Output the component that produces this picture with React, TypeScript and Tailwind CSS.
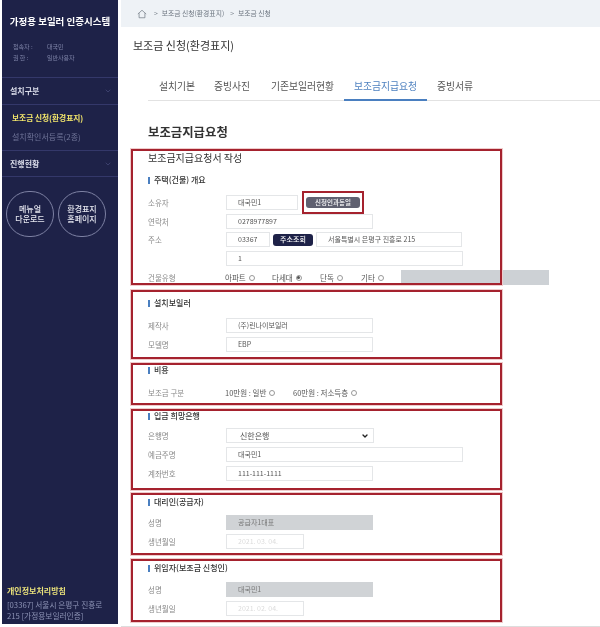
import React from 'react'
import { ChevronDown } from 'lucide-react'

const font = "font-['Noto_Sans_CJK_KR','Noto_Sans',sans-serif]"

const Box = ({ h, mt, children }: { h: string; mt: string; children: React.ReactNode }) => (
  <section className={`ml-[10px] w-[371px] border-2 border-[#a5222e] pl-[15px] shadow-[0_0_0_1px_#efcccc] ${h} ${mt}`}>
    {children}
  </section>
)

const Heading = ({ text, mt }: { text: string; mt: string }) => (
  <div className={`flex h-[10px] items-center gap-[4px] ${mt}`}>
    <span className="h-[7px] w-[2px] bg-[#4a7fc0]" />
    <span className="text-[8px] leading-none font-medium text-[#333]">{text}</span>
  </div>
)

const Row = ({ label, mt, children }: { label: string; mt: string; children: React.ReactNode }) => (
  <div className={`flex h-[15px] items-center ${mt}`}>
    <span className="w-[78px] shrink-0 text-[7.5px] leading-none text-[#8a8a8a]">{label}</span>
    {children}
  </div>
)

const Field = ({ value, w, gray, pale }: { value?: string; w: string; gray?: boolean; pale?: boolean }) => (
  <div
    className={`flex h-[15px] shrink-0 items-center border pl-[11px] text-[7px] leading-none ${w} ${
      gray ? 'border-[#d0d3d6] bg-[#d0d3d6] text-[#777]' : 'border-[#e4e6e8] bg-white text-[#555]'
    } ${pale ? 'text-[#dcdcdc]' : ''}`}
  >
    {value}
  </div>
)

const Radio = ({ label, w, checked }: { label: string; w: string; checked?: boolean }) => (
  <div className={`flex shrink-0 items-center gap-[3px] text-[7.5px] leading-none text-[#555] ${w}`}>
    <span>{label}</span>
    <span className="flex size-[6px] items-center justify-center rounded-full border border-[#999]">
      {checked && <span className="size-[3px] rounded-full bg-[#555]" />}
    </span>
  </div>
)

const Sidebar = () => (
  <aside className="ml-[2px] flex h-[624px] w-[116px] shrink-0 flex-col bg-[#1e2248]">
    <h1 className="pt-[14px] text-center text-[9.5px] leading-[14px] font-bold text-white">가정용 보일러 인증시스템</h1>
    <dl className="mt-[14px] grid h-[21px] grid-cols-[34px_1fr] pl-[11px] text-[6px] leading-[9px] text-[#7f84a8]">
      <dt>접속자 :</dt>
      <dd>대국민</dd>
      <dt>권 한 :</dt>
      <dd>일반사용자</dd>
    </dl>
    <div className="mt-[14px] flex h-[28px] items-center justify-between border-y border-[#34386a] pr-[6px] pl-[8px]">
      <span className="text-[8px] font-bold text-[#d9dbe8]">설치구분</span>
      <ChevronDown className="size-[8px] text-[#4a4f7f]" />
    </div>
    <div className="flex h-[45px] flex-col pl-[10px]">
      <span className="mt-[6px] text-[7.7px] leading-[13px] font-bold text-[#f2e56b]">보조금 신청(환경표지)</span>
      <span className="mt-[6px] text-[8px] leading-[13px] text-[#6f7498]">설치확인서등록(2종)</span>
    </div>
    <div className="flex h-[27px] items-center justify-between border-y border-[#34386a] pr-[6px] pl-[8px]">
      <span className="text-[8px] font-bold text-[#d9dbe8]">진행현황</span>
      <ChevronDown className="size-[8px] text-[#4a4f7f]" />
    </div>
    <div className="mt-[14px] flex gap-[4px] pl-[4px]">
      <div className="flex h-[46px] w-[48px] items-center justify-center rounded-full border border-[#7d81a3] text-center text-[8px] leading-[10px] font-medium text-[#e5e6ef]">
        메뉴얼
        <br />
        다운로드
      </div>
      <div className="flex h-[46px] w-[48px] items-center justify-center rounded-full border border-[#7d81a3] text-center text-[8px] leading-[10px] font-medium text-[#e5e6ef]">
        환경표지
        <br />
        홈페이지
      </div>
    </div>
    <div className="mt-auto pb-[3px] pl-[5px]">
      <p className="text-[8px] leading-[12px] font-bold text-[#e8e07a]">개인정보처리방침</p>
      <p className="mt-[2px] text-[7.7px] leading-[11px] whitespace-nowrap text-[#8d93b5]">
        [03367] 서울시 은평구 진흥로
        <br />
        215 [가정용보일러인증]
      </p>
    </div>
  </aside>
)

const App = () => (
  <div className={`flex h-[627px] w-[600px] overflow-hidden bg-white blur-[0.5px] ${font}`}>
    <Sidebar />
    <main className="isolate ml-[3px] h-[627px] min-w-0 flex-1 border-b border-[#ddd] bg-white">
      <div className="flex h-[27px] items-center gap-[4px] bg-[#eef2f6] pl-[16px] text-[6.8px] leading-none text-[#6d7680]">
        <svg viewBox="0 0 12 12" className="size-[10px]" fill="none" stroke="#66707a" strokeWidth="0.8">
          <path d="M1 6 6 1.5 11 6M2.5 5v5.5h7V5" />
        </svg>
        <span className="ml-[3px]">&gt;</span>
        <span>보조금 신청(환경표지)</span>
        <span className="ml-[2px]">&gt;</span>
        <span>보조금 신청</span>
      </div>

      <h2 className="mt-[10px] ml-[12px] h-[16px] text-[11px] leading-[16px] text-[#333]">보조금 신청(환경표지)</h2>

      <nav className="mt-[27px] ml-[27px] flex h-[21px] border-b border-[#e2e2e2] pl-[11px] text-[9.8px] leading-none text-[#555]">
        <span className="w-[55px] pt-[2px]">설치기본</span>
        <span className="w-[57px] pt-[2px]">증빙사진</span>
        <span className="w-[73px] pt-[2px]">기존보일러현황</span>
        <span className="h-[21px] w-[83px] border-b-2 border-[#4a7fc0] pt-[2px] pl-[10px] text-[#4f82c0]">보조금지급요청</span>
        <span className="ml-[10px] pt-[2px]">증빙서류</span>
      </nav>

      <h3 className="mt-[23px] ml-[27px] h-[16px] text-[12.4px] leading-[16px] font-bold text-[#333]">보조금지급요청</h3>

      <Box h="h-[136px]" mt="mt-[9px]">
        <p className="h-[13px] text-[10px] leading-[14px] text-[#333]">보조금지급요청서 작성</p>
        <Heading text="주택(건물) 개요" mt="mt-[11px]" />
        <Row label="소유자" mt="mt-[10px]">
          <Field value="대국민1" w="w-[72px]" />
          <div className="ml-[4px] flex h-[23px] w-[62px] shrink-0 items-center justify-center border-2 border-[#a5222e] bg-white">
            <div className="flex h-[11px] w-[54px] items-center justify-center rounded-[3px] bg-[#5f6070] text-[6.5px] leading-none font-medium text-white">
              신청인과동일
            </div>
          </div>
        </Row>
        <Row label="연락처" mt="mt-[4px]">
          <Field value="0278977897" w="w-[147px]" />
        </Row>
        <Row label="주소" mt="mt-[3px]">
          <Field value="03367" w="w-[44px]" />
          <div className="ml-[3px] flex h-[12px] w-[40px] items-center justify-center rounded-[3px] bg-[#1e2248] text-[7px] leading-none font-medium text-white">
            주소조회
          </div>
          <Field value="서울특별시 은평구 진흥로 215" w="w-[146px] ml-[3px]" />
        </Row>
        <Row label="" mt="mt-[4px]">
          <Field value="1" w="w-[237px]" />
        </Row>
        <Row label="건물유형" mt="mt-[4px]">
          <div className="-ml-[1px] flex items-center">
            <Radio label="아파트" w="w-[47px]" />
            <Radio label="다세대" w="w-[48px]" checked />
            <Radio label="단독" w="w-[41px]" />
            <Radio label="기타" w="w-[40px]" />
            <div className="relative -z-10 h-[15px] w-[148px] shrink-0 bg-[#cdd1d5]" />
          </div>
        </Row>
      </Box>

      <Box h="h-[69px]" mt="mt-[5px]">
        <Heading text="설치보일러" mt="mt-[6px]" />
        <Row label="제작사" mt="mt-[10px]">
          <Field value="(주)린나이보일러" w="w-[147px]" />
        </Row>
        <Row label="모델명" mt="mt-[4px]">
          <Field value="EBP" w="w-[147px]" />
        </Row>
      </Box>

      <Box h="h-[42px]" mt="mt-[4px]">
        <Heading text="비용" mt="mt-[0px]" />
        <Row label="보조금 구분" mt="mt-[10px]">
          <div className="-ml-[1px] flex items-center">
            <Radio label="10만원 : 일반" w="w-[68px]" />
            <Radio label="60만원 : 저소득층" w="w-[80px]" />
          </div>
        </Row>
      </Box>

      <Box h="h-[81px]" mt="mt-[4px]">
        <Heading text="입금 희망은행" mt="mt-[0px]" />
        <Row label="은행명" mt="mt-[7px]">
          <div className="flex h-[15px] w-[148px] items-center justify-between border border-[#e4e6e8] pr-[4px] pl-[13px] text-[8px] leading-none text-[#555]">
            신한은행
            <ChevronDown className="size-[8px] text-[#222]" strokeWidth={4} />
          </div>
        </Row>
        <Row label="예금주명" mt="mt-[4px]">
          <Field value="대국민1" w="w-[237px]" />
        </Row>
        <Row label="계좌번호" mt="mt-[4px]">
          <Field value="111-111-1111" w="w-[147px]" />
        </Row>
      </Box>

      <Box h="h-[62px]" mt="mt-[3px]">
        <Heading text="대리인(공급자)" mt="mt-[2px]" />
        <Row label="성명" mt="mt-[8px]">
          <Field value="공급자1대표" w="w-[147px]" gray />
        </Row>
        <Row label="생년월일" mt="mt-[4px]">
          <Field value="2021. 03. 04." w="w-[78px]" pale />
        </Row>
      </Box>

      <Box h="h-[63px]" mt="mt-[4px]">
        <Heading text="위임자(보조금 신청인)" mt="mt-[2px]" />
        <Row label="성명" mt="mt-[9px]">
          <Field value="대국민1" w="w-[147px]" gray />
        </Row>
        <Row label="생년월일" mt="mt-[4px]">
          <Field value="2021. 02. 04." w="w-[78px]" pale />
        </Row>
      </Box>
    </main>
  </div>
)

export default App
